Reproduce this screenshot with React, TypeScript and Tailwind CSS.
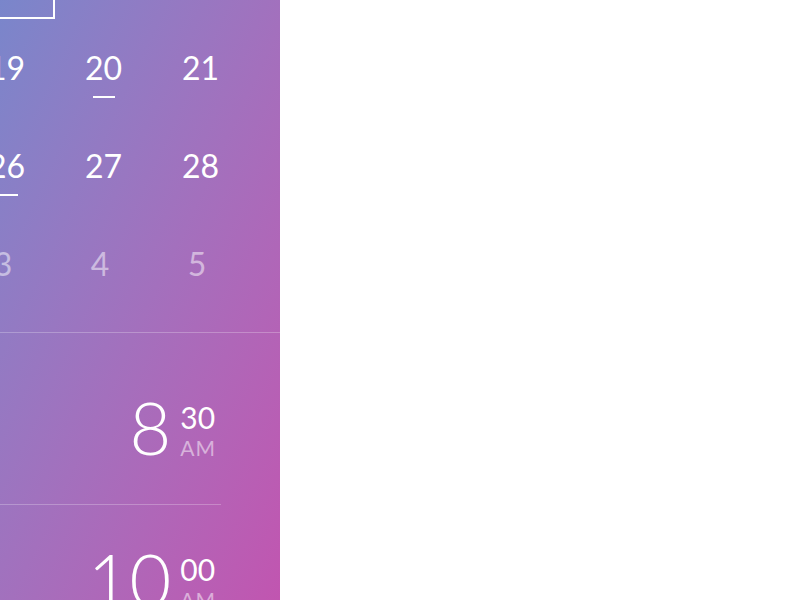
import React from "react";

type Cell = { d: string; u?: boolean; sel?: boolean; muted?: boolean };

const rows: Cell[][] = [
  [{ d: "12", u: true, sel: true }, { d: "13" }, { d: "14" }],
  [{ d: "19" }, { d: "20", u: true }, { d: "21" }],
  [{ d: "26", u: true }, { d: "27" }, { d: "28" }],
  [
    { d: "3", muted: true },
    { d: "4", muted: true },
    { d: "5", muted: true },
  ],
];

const times = [
  { h: "8", m: "30", p: "AM" },
  { h: "10", m: "00", p: "AM" },
  { h: "11", m: "30", p: "AM" },
];

export default function App() {
  return (
    <div className="flex w-[800px] h-[600px] bg-white font-['Lato',sans-serif]">
      <div className="w-[280px] h-full overflow-hidden shrink-0 bg-gradient-to-br from-[#7986cb] to-[#c155b0] text-white">
        <div className="mt-[-79px] ml-[-42px] pb-[19px]">
          {rows.map((row, i) => (
            <div key={i} className="flex">
              {row.map((c) => (
                <div
                  key={c.d}
                  className={
                    "w-[97px] h-[98px] shrink-0 flex flex-col items-center " +
                    (c.sel ? "border-2 border-white pt-[31px] " : "pt-[33px] ") +
                    (c.muted ? "pr-[7px]" : "")
                  }
                >
                  <span
                    className={
                      "text-[32px] leading-[32px] " +
                      (c.muted ? "text-white/50" : "text-white")
                    }
                  >
                    {c.d}
                  </span>
                  {c.u ? (
                    <div className="w-[22px] h-[2px] mt-[12px] bg-white" />
                  ) : null}
                </div>
              ))}
            </div>
          ))}
        </div>
        <div className="h-px bg-white/25" />
        <div className="pt-[20px] mr-[59px]">
          {times.map((t) => (
            <div
              key={t.h}
              className="flex justify-end items-start pt-[38px] pb-[41px] pr-[5px] border-b border-white/25"
            >
              <span className="text-[72px] leading-[72px] font-light">{t.h}</span>
              <div className="flex flex-col ml-[9px] pt-[11px]">
                <span className="text-[30px] leading-[30px]">{t.m}</span>
                <span className="text-[21px] leading-[21px] mt-[5px] text-white/50 tracking-[1px]">
                  {t.p}
                </span>
              </div>
            </div>
          ))}
        </div>
      </div>
      <div className="flex-1" />
    </div>
  );
}
